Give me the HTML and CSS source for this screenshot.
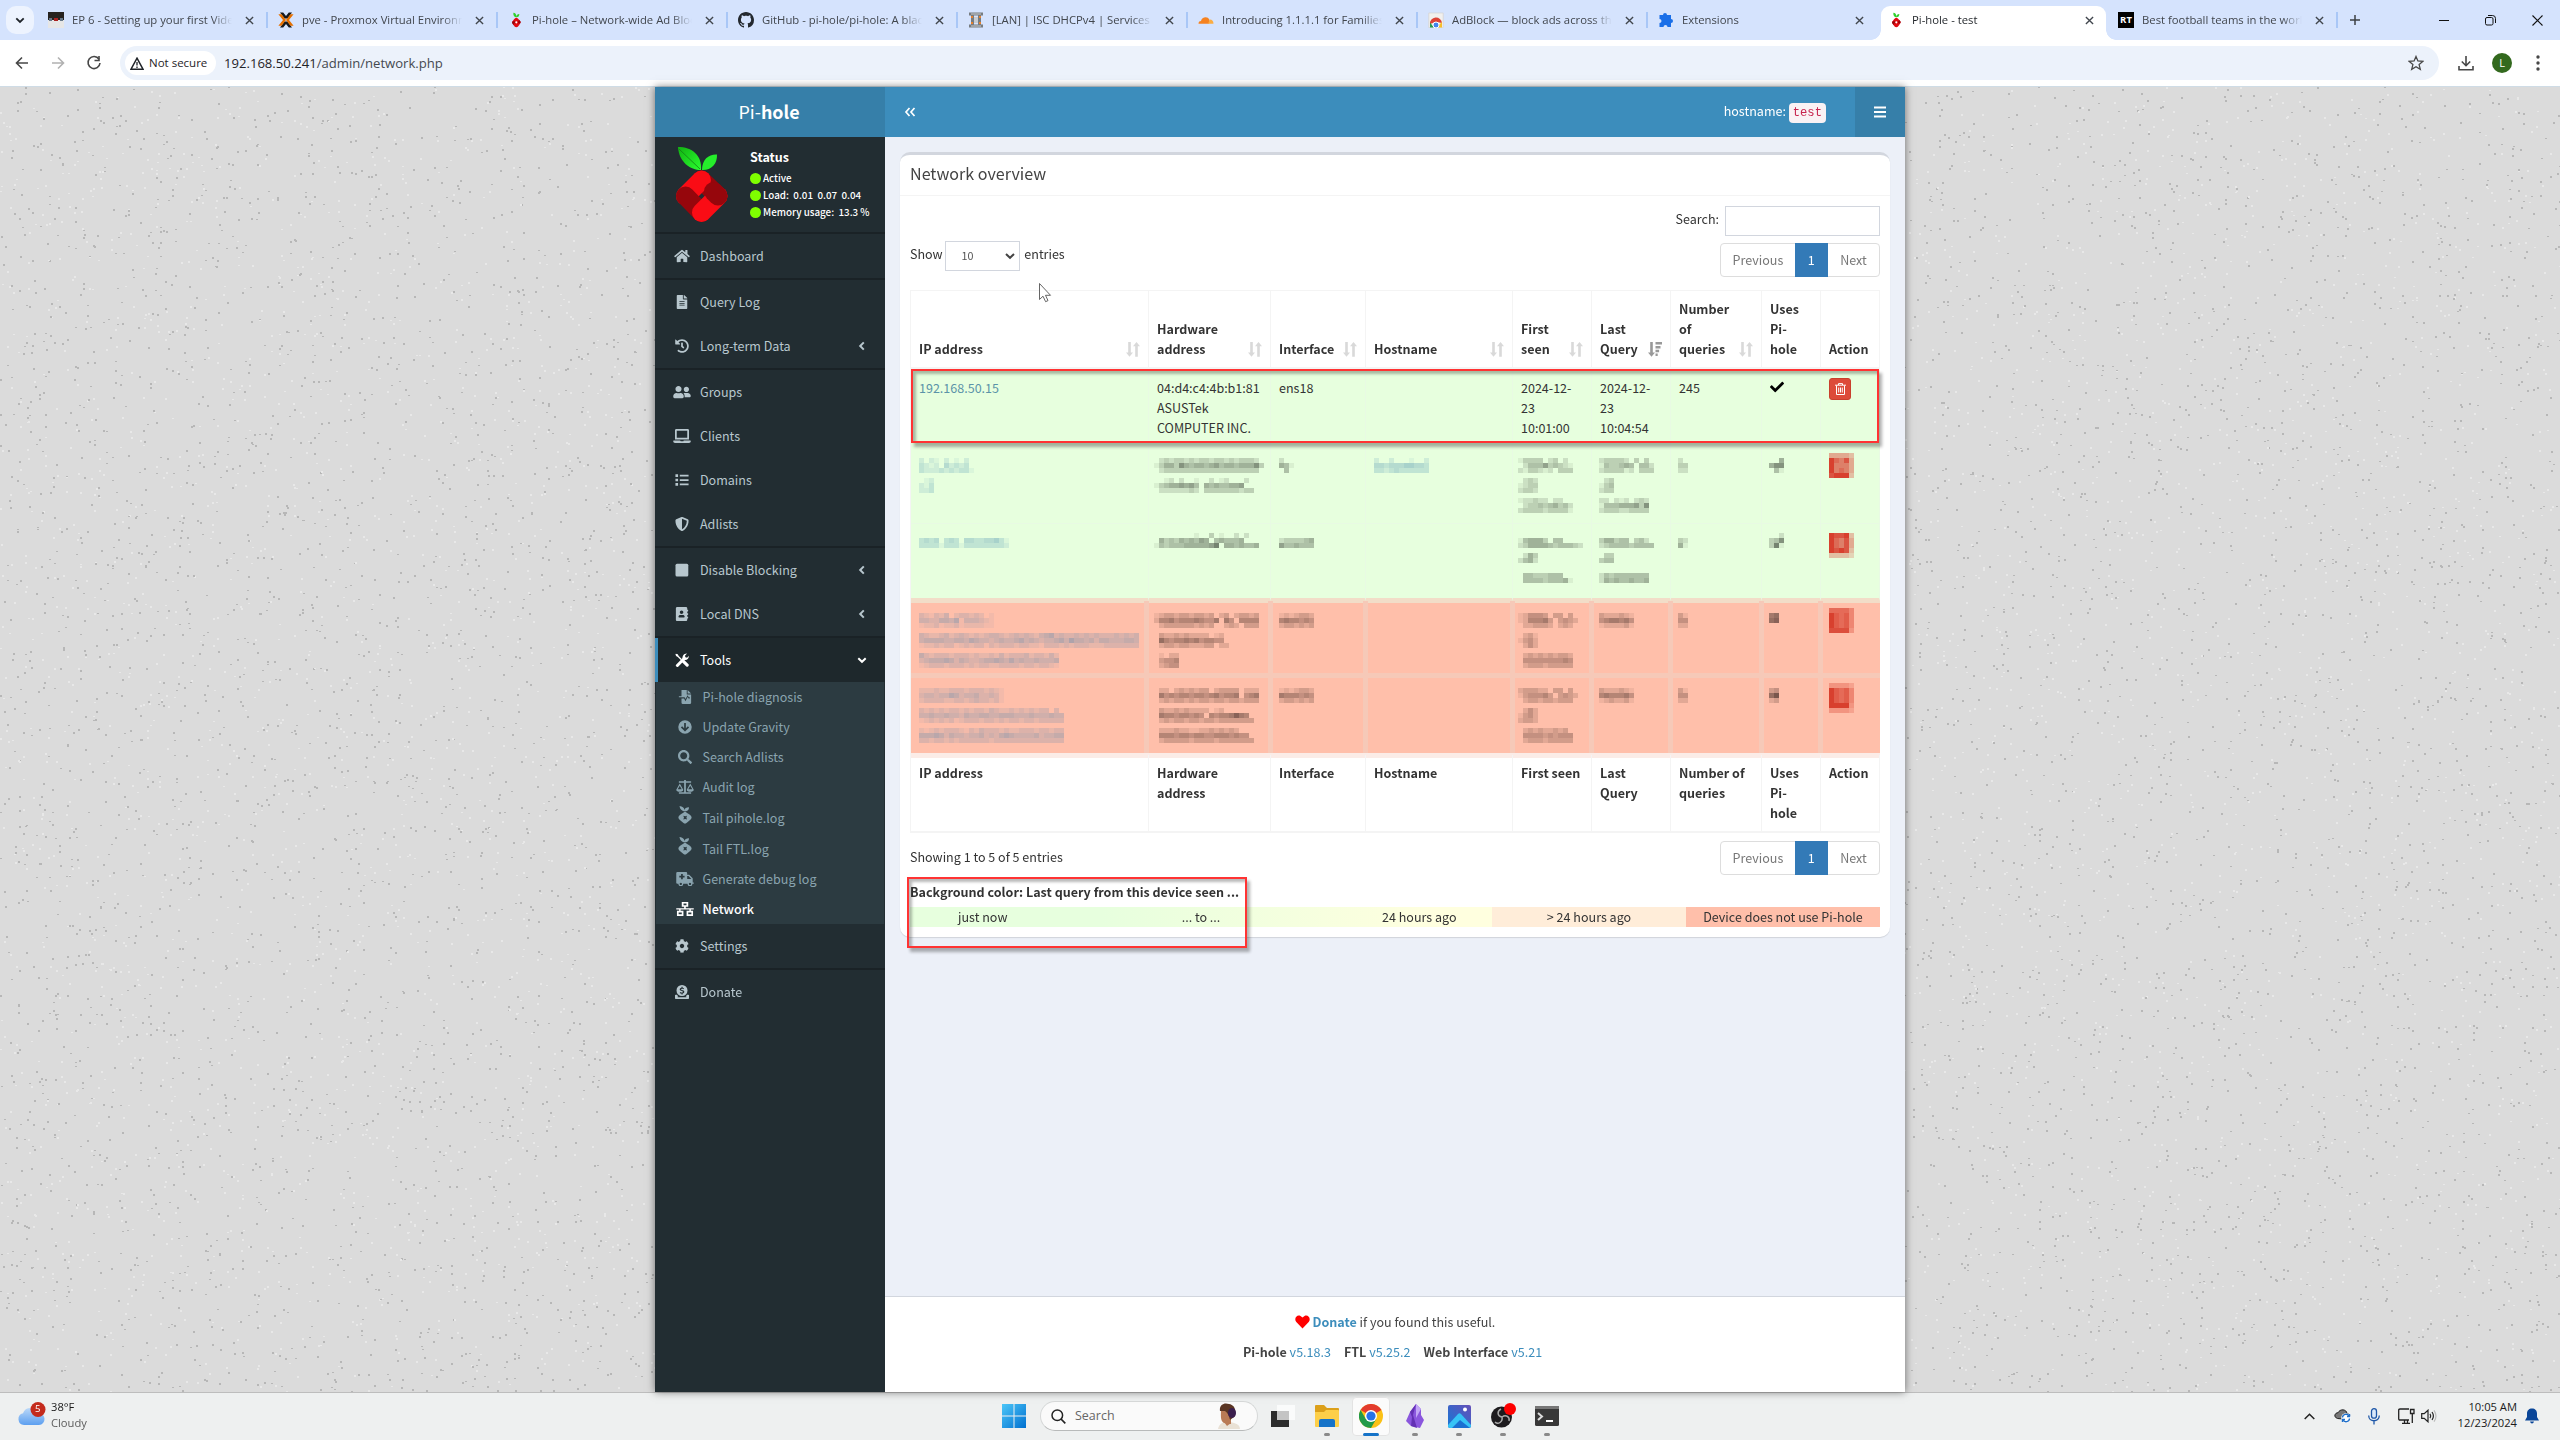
FILE: index.html
```html
<!DOCTYPE html>
<html lang="en">
<head>
<meta charset="utf-8">
<title>Pi-hole - test</title>
<link rel="stylesheet" href="styles.css">
</head>
<body>
<svg width="0" height="0" class="defs">
  <symbol id="home" viewBox="0 0 576 512"><path d="M280.37 148.26L96 300.11V464a16 16 0 0 0 16 16l112.06-.29a16 16 0 0 0 15.92-16V368a16 16 0 0 1 16-16h64a16 16 0 0 1 16 16v95.64a16 16 0 0 0 16 16.05L464 480a16 16 0 0 0 16-16V300L295.67 148.26a12.19 12.19 0 0 0-15.3 0zM571.6 251.47L488 182.56V44.05a12 12 0 0 0-12-12h-56a12 12 0 0 0-12 12v72.61L318.47 43a48 48 0 0 0-61 0L4.34 251.47a12 12 0 0 0-1.6 16.9l25.5 31A12 12 0 0 0 45.15 301l235.22-193.74a12.19 12.19 0 0 1 15.3 0L530.9 301a12 12 0 0 0 16.9-1.6l25.5-31a12 12 0 0 0-1.7-16.93z"/></symbol>
  <symbol id="file" viewBox="0 0 384 512"><path d="M224 136V0H24C10.7 0 0 10.7 0 24v464c0 13.3 10.7 24 24 24h336c13.3 0 24-10.7 24-24V160H248c-13.2 0-24-10.8-24-24zm64 236c0 6.600-5.400 12-12 12H108c-6.600 0-12-5.400-12-12v-8c0-6.600 5.400-12 12-12h168c6.600 0 12 5.400 12 12v8zm0-64c0 6.600-5.400 12-12 12H108c-6.600 0-12-5.400-12-12v-8c0-6.600 5.400-12 12-12h168c6.600 0 12 5.400 12 12v8zm0-72v8c0 6.600-5.400 12-12 12H108c-6.600 0-12-5.400-12-12v-8c0-6.600 5.400-12 12-12h168c6.600 0 12 5.400 12 12zm96-114.100v6.100H256V0h6.100c6.400 0 12.500 2.500 17 7l97.900 98c4.500 4.500 7 10.600 7 16.900z"/></symbol>
  <symbol id="history" viewBox="0 0 512 512"><path d="M504 255.531c.253 136.640-111.180 248.372-247.820 248.468-59.015.042-113.223-20.530-155.822-54.911-11.077-8.940-11.905-25.541-1.839-35.607l11.267-11.267c8.609-8.609 22.353-9.551 31.891-1.984C173.062 425.135 212.781 440 256 440c101.705 0 184-82.311 184-184 0-101.705-82.311-184-184-184-48.814 0-93.149 18.969-126.068 49.932l50.754 50.754c10.080 10.080 2.941 27.314-11.313 27.314H24c-8.837 0-16-7.163-16-16V38.627c0-14.254 17.234-21.393 27.314-11.314l49.372 49.372C129.209 34.136 189.552 8 256 8c136.810 0 247.747 110.780 248 247.531zm-180.912 78.784l9.823-12.630c8.138-10.463 6.253-25.542-4.210-33.679L288 256.349V152c0-13.255-10.745-24-24-24h-16c-13.255 0-24 10.745-24 24v135.651l65.409 50.874c10.463 8.137 25.541 6.253 33.679-4.210z"/></symbol>
  <symbol id="users" viewBox="0 0 640 512"><path d="M192 256c61.900 0 112-50.100 112-112S253.900 32 192 32 80 82.100 80 144s50.100 112 112 112zm76.800 32h-8.300c-20.800 10-43.900 16-68.500 16s-47.600-6-68.500-16h-8.300C51.600 288 0 339.600 0 403.200V432c0 26.500 21.500 48 48 48h288c26.500 0 48-21.500 48-48v-28.800c0-63.600-51.600-115.200-115.200-115.200zM480 256c53 0 96-43 96-96s-43-96-96-96-96 43-96 96 43 96 96 96zm48 32h-3.800c-13.900 4.800-28.600 8-44.200 8s-30.300-3.200-44.200-8H432c-20.400 0-39.200 5.900-55.700 15.400 24.400 26.300 39.700 61.200 39.700 99.800v38.400c0 2.200-.5 4.300-.6 6.400H592c26.500 0 48-21.500 48-48 0-61.900-50.100-112-112-112z"/></symbol>
  <symbol id="laptop" viewBox="0 0 640 512"><path d="M624 416H381.540c-.740 19.810-14.710 32-32.740 32H288c-18.690 0-33.020-17.470-32.770-32H16c-8.800 0-16 7.200-16 16v16c0 35.200 28.800 64 64 64h512c35.200 0 64-28.800 64-64v-16c0-8.800-7.200-16-16-16zM576 48c0-26.400-21.600-48-48-48H112C85.600 0 64 21.600 64 48v336h512V48zm-64 272H128V64h384v256z"/></symbol>
  <symbol id="list" viewBox="0 0 16 16"><path d="M.5 1.500h3v3h-3zM.5 6.500h3v3h-3zM.5 11.500h3v3h-3zM5.500 2h10v2h-10zM5.500 7h10v2h-10zM5.500 12h10v2h-10z"/></symbol>
  <symbol id="shield" viewBox="0 0 512 512"><path d="M466.500 83.700l-192-80a48.150 48.150 0 0 0-36.900 0l-192 80C27.700 91.100 16 108.600 16 128c0 198.500 114.500 335.700 221.500 380.300 11.800 4.900 25.100 4.900 36.900 0C360.100 472.600 496 349.300 496 128c0-19.400-11.700-36.900-29.500-44.300zM256.100 446.300l-.1-381 175.900 73.300c-3.300 151.400-82.100 261.100-175.800 307.700z"/></symbol>
  <symbol id="stop" viewBox="0 0 14 14"><rect x=".5" y=".7" width="12.800" height="12.800" rx="1.500"/></symbol>
  <symbol id="book" viewBox="0 0 448 512"><path d="M436 160c6.600 0 12-5.400 12-12v-40c0-6.600-5.400-12-12-12h-20V48c0-26.500-21.500-48-48-48H48C21.500 0 0 21.500 0 48v416c0 26.500 21.500 48 48 48h320c26.500 0 48-21.500 48-48v-48h20c6.600 0 12-5.400 12-12v-40c0-6.600-5.400-12-12-12h-20v-64h20c6.600 0 12-5.400 12-12v-40c0-6.600-5.400-12-12-12h-20v-64h20zm-228-32c35.300 0 64 28.700 64 64s-28.700 64-64 64-64-28.700-64-64 28.700-64 64-64zm112 236.800c0 10.600-10 19.200-22.400 19.200H118.400C106 384 96 375.400 96 364.800v-19.200c0-31.800 30.100-57.600 67.200-57.600h5c12.300 5.100 25.700 8 39.800 8s27.600-2.900 39.800-8h5c37.100 0 67.200 25.800 67.200 57.600v19.200z"/></symbol>
  <symbol id="tools" viewBox="0 0 16 16"><path d="M1 .8L3.200 1.300 4.200 3.500 8 7.200 6.900 8.300 3.200 4.500 1.200 3.500 .5 1.300z"/><path d="M2.700 14.200L10.300 6.500" stroke="currentColor" stroke-width="3.400" stroke-linecap="round"/><path d="M8.700 6.900c-.7-3 1.400-6.600 5-6.300L11.400 3l.5 1.900 1.900.4 1.900-2.300c.4 3-1.700 5.300-4.900 4.900z"/><path d="M9.600 9.600l4.300 4.200" stroke="currentColor" stroke-width="3.600" stroke-linecap="round"/></symbol>
  <symbol id="medical" viewBox="0 0 16 16"><path d="M4 0h6v5h5v9.500a1.500 1.500 0 0 1-1.500 1.500h-8A1.500 1.500 0 0 1 4 14.500V9.800h3l1.500 3L11 8l1 1.800h1.500V8.400h-1.300L11 6l-2.400 4.300L7.500 8.400H1V7h3zM11 0l4 4h-4z"/></symbol>
  <symbol id="down" viewBox="0 0 16 16"><path fill-rule="evenodd" d="M8 .3a7.700 7.700 0 1 1 0 15.400A7.700 7.700 0 0 1 8 .3zM7 3.500v6L4.700 7.200 3.300 8.600 8 13.200l4.700-4.600-1.400-1.400L9 9.500v-6z"/></symbol>
  <symbol id="search" viewBox="0 0 512 512"><path d="M505 442.700L405.300 343c-4.500-4.500-10.600-7-17-7H372c27.600-35.300 44-79.700 44-128C416 93.100 322.900 0 208 0S0 93.100 0 208s93.100 208 208 208c48.300 0 92.700-16.400 128-44v16.300c0 6.400 2.500 12.500 7 17l99.700 99.700c9.400 9.400 24.600 9.400 33.900 0l28.300-28.300c9.400-9.400 9.400-24.600.1-34zM208 336c-70.700 0-128-57.200-128-128 0-70.700 57.200-128 128-128 70.700 0 128 57.200 128 128 0 70.700-57.200 128-128 128z"/></symbol>
  <symbol id="scale" viewBox="0 0 20 16"><path fill-rule="evenodd" d="M9 0h2v1.500h6V3h-6v11h6v1.700H3V14h6V3H3V1.500h6zM4 4l4 7c0 3.300-8 3.300-8 0zm0 2.500L1.700 10.600h4.600zM16 4l4 7c0 3.300-8 3.300-8 0zm0 2.500l-2.300 4.100h4.600z"/></symbol>
  <symbol id="pihole" viewBox="0 0 14 18"><path d="M1.500 0c3 .3 4.500 1.500 5 4C7 2.300 8.500 1.200 11 1.300c0 2.500-1.300 4-4 4.200C4 5 1.800 3.200 1.500 0z"/><path fill-rule="evenodd" d="M7 6c1.300 0 1.500.7 3 1.500 2.300 1.500 3.600 2.600 3.600 4s-1.400 2.600-3.600 4.200C8.500 16.700 8.300 17.500 7 17.500s-1.500-.8-3-1.800C1.800 14.100.4 13 .4 11.500S1.800 9 4 7.500C5.500 6.700 5.700 6 7 6zM5.300 9.700L6 11.600l-.7 2 1.900-.7 1.800.7-.6-2 .6-1.900-1.800.6z"/></symbol>
  <symbol id="truck" viewBox="0 0 20 16"><path fill-rule="evenodd" d="M1.300 0h9.900q1.300 0 1.300 1.300V3h2.300l4 4v5H20v1.500h-1.500a2.800 2.800 0 0 1-5.600 0H8a2.800 2.800 0 0 1-5.600 0H1.300Q0 13.500 0 12.200V1.300Q0 0 1.300 0zM5.500 2.300v2h-2v2h2v2h2v-2h2v-2h-2v-2zm7 2.300v3.500h4.800L14 4.600zM5.200 12.200a1.300 1.300 0 1 0 .01 0zm10.500 0a1.300 1.300 0 1 0 .01 0z"/></symbol>
  <symbol id="network" viewBox="0 0 20 16"><path fill-rule="evenodd" d="M6.300 0h7.400v5.500h-2.800V7H20v1.700h-3.300V10h2.500v6h-7.400v-6H15V8.700H5V10h3.200v6H.8v-6h2.500V8.700H0V7h9V5.500H6.300zm2 1.800v2h3.400v-2zM2.700 11.900v2.200h3.600v-2.200zm11 0v2.200h3.600v-2.200z"/></symbol>
  <symbol id="cog" viewBox="0 0 512 512"><path d="M487.400 315.700l-42.600-24.600c4.300-23.200 4.300-47 0-70.200l42.600-24.600c4.900-2.800 7.100-8.600 5.500-14-11.100-35.600-30-67.800-54.700-94.600-3.800-4.100-10-5.100-14.800-2.300L380.800 110c-17.900-15.400-38.500-27.300-60.800-35.100V25.800c0-5.600-3.900-10.500-9.400-11.700-36.700-8.200-74.300-7.800-109.200 0-5.500 1.200-9.400 6.100-9.400 11.700V75c-22.200 7.900-42.800 19.800-60.800 35.100L88.700 85.500c-4.900-2.800-11-1.900-14.800 2.300-24.700 26.700-43.600 58.900-54.700 94.600-1.700 5.400.6 11.200 5.500 14L67.300 221c-4.300 23.200-4.300 47 0 70.200l-42.600 24.600c-4.900 2.800-7.100 8.600-5.500 14 11.100 35.600 30 67.800 54.700 94.600 3.800 4.100 10 5.100 14.800 2.300l42.600-24.600c17.900 15.400 38.500 27.300 60.800 35.100v49.200c0 5.600 3.900 10.500 9.400 11.700 36.700 8.200 74.300 7.800 109.200 0 5.500-1.200 9.400-6.100 9.400-11.700v-49.200c22.200-7.900 42.800-19.800 60.800-35.100l42.600 24.600c4.900 2.800 11 1.900 14.800-2.300 24.700-26.700 43.600-58.900 54.700-94.600 1.500-5.500-.7-11.300-5.600-14.100zM256 336c-44.100 0-80-35.900-80-80s35.900-80 80-80 80 35.900 80 80-35.900 80-80 80z"/></symbol>
  <symbol id="donate" viewBox="0 0 16 16"><path fill-rule="evenodd" d="M8 0a6.300 6.300 0 1 1 0 12.600A6.300 6.300 0 0 1 8 0zm-.6 2v1C5 3.300 4.700 6 7 6.600l1.500.4c1 .5.500 1.500-.5 1.500-.7 0-1.300-.2-1.900-.6L5.300 9c.6.500 1.300.8 2.100.8v1h1.300v-1c2.400-.4 2.700-3 .3-3.800L7.500 5.600c-1-.4-.4-1.300.4-1.300.6 0 1.100.2 1.600.5l.9-1C9.900 3.400 9.300 3.100 8.700 3V2zM.8 11h1.500c.5.900 1 1.500 1.700 2.100H3v.9h10v-.9h-1c.7-.6 1.300-1.200 1.700-2.100h1.500q.8 0 .8.800v3.400q0 .8-.8.800H.8q-.8 0-.8-.8v-3.400Q0 11 .8 11z"/></symbol>
  <symbol id="check" viewBox="0 0 512 512"><path d="M173.898 439.404l-166.400-166.400c-9.997-9.997-9.997-26.206 0-36.204l36.203-36.204c9.997-9.998 26.207-9.998 36.204 0L192 312.690 432.095 72.596c9.997-9.997 26.207-9.997 36.204 0l36.203 36.204c9.997 9.997 9.997 26.206 0 36.204l-294.400 294.401c-9.998 9.997-26.207 9.997-36.204-.001z"/></symbol>
  <symbol id="left" viewBox="0 0 10 10"><path d="M6.800 1.400L3.200 5l3.600 3.600" fill="none" stroke="currentColor" stroke-width="2"/></symbol>
  <symbol id="chevdown" viewBox="0 0 10 10"><path d="M1.300 3.200L5 6.800l3.700-3.600" fill="none" stroke="currentColor" stroke-width="2"/></symbol>
  <symbol id="sort" viewBox="0 0 14 15"><path d="M2.200 0h2.600v10.500H7L3.500 14.700 0 10.500h2.200zM9.200 14.700h2.600V4.200H14L10.500 0 7 4.200h2.200z"/></symbol>
  <symbol id="sortdesc" viewBox="0 0 14 15"><path d="M2.200 0h2.600v10.500H7L3.500 14.700 0 10.500h2.200zM7.500 0H14v2.400H7.500zM7.500 4h5v2.400h-5zM7.500 7.800h3.600v2.400H7.500zM7.500 11.500h2.200v2.400H7.500z"/></symbol>
  <symbol id="berry" viewBox="0 0 14 24"><path d="M3 1c3 .3 4.500 2 4.500 6C8 4.500 9 3 12 3c0 3-1.500 5-4.500 5C4.500 7.500 2.500 5 3 1z" fill="#2fd02c"/><path d="M7.500 8.500c2 0 2.500 1.500 4 3 2 2 2.500 3 2.500 4s-1 2.500-2.500 4.500c-1.300 2-2 3-4 3s-2.700-1-4-3C2 18 1 16.500 1 15.500s1-2 2.500-4c1.500-1.500 2-3 4-3z" fill="#e00b12"/><path d="M1 15.500c1-2.500 5-2 4.500 0S3.300 18 3.500 20C2 18 1 16.500 1 15.500zm13 0c-1 2.500-4 2.200-4 0s2-2.500 1.500-4c2 2 2.500 3 2.500 4z" fill="#96060c"/><circle cx="7.500" cy="15.500" r="1.600" fill="#fff"/></symbol>
  <symbol id="x" viewBox="0 0 10 10"><path d="M1 1l8 8M9 1L1 9" stroke="#41464d" stroke-width="1.500" fill="none"/></symbol>
</svg>

<header class="tabstrip">
  <span class="tabsearch"><svg width="10" height="10" viewBox="0 0 10 10"><path d="M1.300 3.300L5 7l3.700-3.700" fill="none" stroke="#1f2328" stroke-width="1.800"/></svg></span>
  <div class="tabs">
    <div class="tab"><svg class="fav" viewBox="0 0 16 16"><path fill="#e6e6e6" d="M0 0h16v16H0z"/><path fill="#26221f" d="M0 0h16v8H0z"/><path fill="#a22" d="M6 6h4v3H6z"/><path fill="#678" d="M1 6h3v3H1zM12 6h3v3h-3z"/></svg><span class="title">EP 6 - Setting up your first Video Lab</span><svg class="x"><use href="#x"/></svg></div>
    <div class="tab"><svg class="fav" viewBox="0 0 16 16"><path d="M2 .5h3.200L8 4l2.800-3.500H14L9.500 6.500h-3zM2 15.500h3.200L8 12l2.800 3.500H14L9.500 9.500h-3z" fill="#16191c"/><path d="M.4 2.200h3.200L8 8l-4.400 5.800H.4L5 8zM15.600 2.200h-3.200L8 8l4.400 5.800h3.200L11 8z" fill="#e57000"/></svg><span class="title">pve - Proxmox Virtual Environment</span><svg class="x"><use href="#x"/></svg></div>
    <div class="tab"><svg class="fav"><use href="#berry"/></svg><span class="title">Pi-hole – Network-wide Ad Blocking</span><svg class="x"><use href="#x"/></svg></div>
    <div class="tab"><svg class="fav" viewBox="0 0 16 16"><path fill="#24292f" d="M8 0C3.580 0 0 3.580 0 8c0 3.540 2.290 6.530 5.470 7.590.4.070.55-.17.55-.38 0-.19-.01-.82-.01-1.490-2.010.37-2.530-.49-2.690-.94-.09-.23-.48-.94-.82-1.130-.28-.15-.68-.52-.01-.53.63-.01 1.080.58 1.230.82.72 1.210 1.870.87 2.330.66.07-.52.28-.87.51-1.070-1.780-.2-3.640-.89-3.640-3.950 0-.87.31-1.590.82-2.150-.08-.2-.36-1.020.08-2.120 0 0 .67-.21 2.200.82.64-.18 1.320-.27 2-.27s1.360.09 2 .27c1.530-1.040 2.200-.82 2.200-.82.44 1.100.16 1.920.08 2.120.51.56.82 1.270.82 2.150 0 3.070-1.870 3.750-3.650 3.950.29.25.54.73.54 1.480 0 1.070-.01 1.930-.01 2.200 0 .21.15.46.55.38A8 8 0 0 0 16 8c0-4.420-3.580-8-8-8z"/></svg><span class="title">GitHub - pi-hole/pi-hole: A black hole</span><svg class="x"><use href="#x"/></svg></div>
    <div class="tab"><svg class="fav" viewBox="0 0 16 16"><path fill="#777c80" d="M1 .5h14v3H1zM1 12.500h14v3H1zM3 3h3v10H3zM10 3h3v10h-3z"/><path fill="#e9812c" d="M3 4h2v2H3zM3 10h2v2H3zM11 4h2v2h-2zM11 10h2v2h-2z"/><path fill="#c9ccd0" d="M3 1.500h10v1H3zM3 13.500h10v1H3zM6 5h4v6H6z"/></svg><span class="title">[LAN] | ISC DHCPv4 | Services | OPN</span><svg class="x"><use href="#x"/></svg></div>
    <div class="tab"><svg class="fav" viewBox="0 0 16 16"><path fill="#f6821f" d="M.5 11.700c0-2 1.200-2.700 2.500-2.700C3.500 5.500 9.500 3.300 11.500 8L11 11.700z"/><path fill="#fbad41" d="M11.800 7.500c2.500 0 3.700 2 3.700 4.200H10z"/></svg><span class="title">Introducing 1.1.1.1 for Families</span><svg class="x"><use href="#x"/></svg></div>
    <div class="tab"><svg class="fav" viewBox="0 0 16 16"><path fill="#f1f0ee" stroke="#d4d2d0" stroke-width=".7" d="M.8 1h14.400v14.500H.8z"/><path fill="#dd4337" d="M2 12a6 6 0 0 1 12-1L8 10z"/><path fill="#2a9a50" d="M2 10.500l4 5H2z"/><path fill="#f6be2b" d="M14 10v5.500H8z"/><circle cx="8" cy="13" r="3" fill="#4384ec" stroke="#fff"/></svg><span class="title">AdBlock — block ads across the web</span><svg class="x"><use href="#x"/></svg></div>
    <div class="tab nosep"><svg class="fav" viewBox="0 0 16 16"><path fill="#1a6fe8" d="M5 3a2 2 0 0 1 4 0h4v4a2 2 0 0 1 0 4v4H9.500a2 2 0 0 0-4 0H1.500v-4a2 2 0 0 0 0-4V3z"/></svg><span class="title">Extensions</span><svg class="x"><use href="#x"/></svg></div>
    <div class="tab active"><svg class="fav"><use href="#berry"/></svg><span class="title">Pi-hole - test</span><svg class="x"><use href="#x"/></svg></div>
    <div class="tab"><span class="fav rt">RT</span><span class="title">Best football teams in the world</span><svg class="x"><use href="#x"/></svg></div>
  </div>
  <svg class="plus" width="12" height="12" viewBox="0 0 12 12"><path d="M6 1v10M1 6h10" stroke="#3c4043" stroke-width="1.500"/></svg>
  <div class="winctl">
    <svg width="10" height="10"><path d="M0 5.500h10" stroke="#111"/></svg>
    <svg width="11" height="11" fill="none" stroke="#111"><rect x=".5" y="2.500" width="7.500" height="7.500" rx="1.500"/><path d="M3 .5h4.500a3 3 0 0 1 3 3V8"/></svg>
    <svg width="11" height="11"><path d="M.5.5l10 10M10.500.5l-10 10" stroke="#111" stroke-width="1.100"/></svg>
  </div>
</header>

<div class="toolbar">
  <svg class="nav" viewBox="0 0 16 16"><path d="M14 8H3M8 2.500L2.500 8 8 13.500" fill="none" stroke="#474747" stroke-width="1.600"/></svg>
  <svg class="nav" viewBox="0 0 16 16"><path d="M2 8h11M8 2.500L13.500 8 8 13.500" fill="none" stroke="#b1b1b1" stroke-width="1.600"/></svg>
  <svg class="nav" viewBox="0 0 16 16"><path d="M13 4.200A6 6 0 1 0 14 8" fill="none" stroke="#474747" stroke-width="1.600"/><path d="M13.800 1v5.300H8.500V4.700h3.700V1z" fill="#474747"/></svg>
  <div class="omnibox">
    <span class="chip"><svg width="14" height="13" viewBox="0 0 14 13"><path d="M7 1.200L13 12.200H1z" fill="none" stroke="#1f2328" stroke-width="1.500"/><path d="M7 5v3.600M7 9.600V11" stroke="#1f2328" stroke-width="1.300"/></svg>Not secure</span>
    <span class="url">192.168.50.241<span>/admin/network.php</span></span>
    <svg class="star" width="16" height="16" viewBox="0 0 16 16"><path d="M8 1.500l1.900 4.500 4.900.4-3.700 3.200 1.200 4.800L8 11.800l-4.300 2.600 1.200-4.800L1.200 6.400 6.100 6z" fill="none" stroke="#474747" stroke-width="1.300"/></svg>
  </div>
  <svg class="dl" width="16" height="16" viewBox="0 0 16 16"><path d="M8 1v9.500M3.800 6.500L8 10.700l4.200-4.200M1 11v3.700h14V11" fill="none" stroke="#474747" stroke-width="1.600"/></svg>
  <span class="avatar">L</span>
  <svg class="dots" width="4" height="16" fill="#474747"><circle cx="2" cy="2" r="1.700"/><circle cx="2" cy="8" r="1.700"/><circle cx="2" cy="14" r="1.700"/></svg>
</div>

<main class="stage">
  <canvas class="grain" id="grain" width="2560" height="1305"></canvas>
  <div class="wrapper">
    <aside class="sidebar">
      <div class="brand">Pi-<b>hole</b></div>
      <div class="panel">
        <svg class="logo" width="54" height="78" viewBox="0 0 54 78">
          <defs><linearGradient id="lf" x1="0" y1="0" x2="1" y2="1"><stop offset="0" stop-color="#12b212"/><stop offset="1" stop-color="#2aff2f"/></linearGradient></defs>
          <path d="M3 0c14 0 24 8 23 23C15 23 4 15 3 0z" fill="url(#lf)"/><path d="M4 2l21 20" stroke="#148016" stroke-width=".8"/><path d="M27 23c0-11 7-16 15-15.500C42.500 17 36 23.500 27 23z" fill="#25ee2b"/>
          <g stroke-width="19" stroke-linecap="round">
            <path d="M43 49L26.500 33" stroke="#96060c"/><path d="M26.500 33L10.500 49" stroke="#fa0c15"/><path d="M10.500 49l16 16.500" stroke="#96060c"/><path d="M26.500 65.500L43 49" stroke="#fa0c15"/><path d="M43 49l-4.500-4.500" stroke="#96060c"/>
          </g>
        </svg>
        <div class="info"><p class="st">Status</p><p><i></i>Active</p><p><i></i>Load:&nbsp; 0.01&nbsp; 0.07&nbsp; 0.04</p><p><i></i>Memory usage:&nbsp; 13.3 %</p></div>
      </div>
      <nav class="menu">
        <a class="sep"><svg class="ic"><use href="#home"/></svg>Dashboard</a>
        <a class="sep"><svg class="ic"><use href="#file"/></svg>Query Log</a>
        <a><svg class="ic"><use href="#history"/></svg>Long-term Data<svg class="car"><use href="#left"/></svg></a>
        <a class="sep"><svg class="ic wide"><use href="#users"/></svg>Groups</a>
        <a><svg class="ic wide"><use href="#laptop"/></svg>Clients</a>
        <a><svg class="ic"><use href="#list"/></svg>Domains</a>
        <a><svg class="ic"><use href="#shield"/></svg>Adlists</a>
        <a class="sep"><svg class="ic"><use href="#stop"/></svg>Disable Blocking<svg class="car"><use href="#left"/></svg></a>
        <a><svg class="ic"><use href="#book"/></svg>Local DNS<svg class="car"><use href="#left"/></svg></a>
        <a class="sep open"><svg class="ic"><use href="#tools"/></svg>Tools<svg class="car"><use href="#chevdown"/></svg></a>
        <div class="sub">
          <a><svg class="ic"><use href="#medical"/></svg>Pi-hole diagnosis</a>
          <a><svg class="ic"><use href="#down"/></svg>Update Gravity</a>
          <a><svg class="ic"><use href="#search"/></svg>Search Adlists</a>
          <a><svg class="ic wide"><use href="#scale"/></svg>Audit log</a>
          <a class="tall"><svg class="ic pi"><use href="#pihole"/></svg>Tail pihole.log</a>
          <a class="tall"><svg class="ic pi"><use href="#pihole"/></svg>Tail FTL.log</a>
          <a><svg class="ic wide"><use href="#truck"/></svg>Generate debug log</a>
          <a class="cur"><svg class="ic wide"><use href="#network"/></svg>Network</a>
        </div>
        <a><svg class="ic"><use href="#cog"/></svg>Settings</a>
        <a class="sep"><svg class="ic"><use href="#donate"/></svg>Donate</a>
      </nav>
    </aside>
    <div class="main">
      <div class="topbar">
        <svg class="fold" width="12" height="10" viewBox="0 0 12 10"><path d="M5.500 1L2 5l3.500 4M10.500 1L7 5l3.500 4" fill="none" stroke="#fff" stroke-width="1.700"/></svg>
        <span class="host">hostname: <code>test</code></span>
        <span class="burger"><svg width="12" height="12"><path d="M0 1.500h12M0 6h12M0 10.500h12" stroke="#fff" stroke-width="2"/></svg></span>
      </div>
      <div class="content">
        <section class="box">
          <h3>Network overview</h3>
          <div class="body">
            <div class="filters">
              <label class="show">Show <span class="select">10<svg width="10" height="8" viewBox="0 0 10 8"><path d="M1 2l4 3.800L9 2" fill="none" stroke="#444" stroke-width="2"/></svg></span> entries</label>
              <div class="right">
                <label class="find">Search:<span class="input"></span></label>
                <div class="pager"><span>Previous</span><span class="on">1</span><span>Next</span></div>
              </div>
            </div>
            <div class="tablebox">
            <table>
              <colgroup><col class="c1"><col class="c2"><col class="c3"><col class="c4"><col class="c5"><col class="c6"><col class="c7"><col class="c8"><col class="c9"></colgroup>
              <thead><tr>
                <th>IP address<svg class="so"><use href="#sort"/></svg></th><th>Hardware<br>address<svg class="so"><use href="#sort"/></svg></th><th>Interface<svg class="so"><use href="#sort"/></svg></th><th>Hostname<svg class="so"><use href="#sort"/></svg></th><th>First<br>seen<svg class="so"><use href="#sort"/></svg></th><th>Last<br>Query<svg class="so dark"><use href="#sortdesc"/></svg></th><th>Number<br>of<br>queries<svg class="so"><use href="#sort"/></svg></th><th>Uses<br>Pi-<br>hole</th><th>Action</th>
              </tr></thead>
              <tbody>
                <tr class="ok"><td class="lnk">192.168.50.15</td><td>04:d4:c4:4b:b1:81<br>ASUSTek<br>COMPUTER INC.</td><td>ens18</td><td></td><td>2024-12-<br>23<br>10:01:00</td><td>2024-12-<br>23<br>10:04:54</td><td>245</td><td><svg class="chk"><use href="#check"/></svg></td><td><span class="trash"><svg width="11" height="12" viewBox="0 0 11 12" fill="none" stroke="#fff"><path d="M0 2.200h11M3.500 2V.6h4V2M1.500 2.500v9h8v-9M3.700 4.500v5M5.500 4.500v5M7.300 4.500v5"/></svg></span></td></tr>
                <tr class="ok px" data-dy="0">
                  <td data-c="b" data-m="2.21.2.1.2|3212.42323.|32223232331||.12|213|223"></td>
                  <td data-c="k" data-dx="-3" data-m=".23233232332332323332|1355375455456455455573|.23333333333333333333||..12.2..1..2.12...2|134556564.54544556|.22222232.3333333233"></td>
                  <td data-c="k" data-m="2..|541|.4."></td>
                  <td data-c="b" data-m="2..2...1..2|44344455443|33234333333"></td>
                  <td data-c="k" data-dx="-3" data-m="13333.23.2.|.2444634321|2133212.333||.232|1233|2332||122322.22.|.2334345342|23333233331"></td>
                  <td data-c="k" data-dx="-1" data-m="233332.3.3.|1433454.442|2333312.333||.23|134|233||22.212.232|1444555637|2333223333"></td>
                  <td data-c="k" data-dx="-1" data-m="2.|33|22"></td><td data-c="k" data-dx="-1" data-m="..5|577|.41"></td>
                  <td data-c="r" data-top="-5" data-m="44443|97684|96664|96764|89993"></td></tr>
                <tr class="ok px" data-dy="-7">
                  <td data-c="b" data-m="||3434.343.443344531|333313331333333332"></td>
                  <td data-c="k" data-dx="-3" data-m="|........1..3.1..2.2.|.5343545465.454445|1434445555568.5545445"></td>
                  <td data-c="k" data-m="||2333345|6445444"></td><td></td>
                  <td data-c="k" data-dx="-3" data-m="||145553.44.|2355554344432||.253|2452|||.44333444.|.4444344451"></td>
                  <td data-c="k" data-dx="-1" data-m="||355344.342|23444434444||.33|344|||2434444444|2545445445"></td>
                  <td data-c="k" data-dx="-1" data-m="||32|51"></td><td data-c="k" data-dx="-1" data-m="|..2|347|381"></td>
                  <td data-c="r" data-m="|98893|97684|97684|98983|33332"></td></tr>
                <tr class="bad px" data-dy="-4">
                  <td data-c="b" data-m="|321324.233232.1|443355461444321|122312231222211||43223423432323443234343245634334343433343434|45555445546544345445645434456475545355444554|12232331232331323332332213332323332223333333||5323332333232232423334233242|3455565354334556546454454445|1233323332323322333323323321"></td>
                  <td data-c="k" data-dx="-3" data-m="|123323323323.23.23323|2556455565446.64.5555|.23333332323..232.333||.3223232222.12|.7545565645544|.23323322233.22||.1.22|.3445|.2344"></td>
                  <td data-c="k" data-m="|1212332|5655454|2332323"></td><td></td>
                  <td data-c="k" data-dx="-3" data-m="|124443.33.3|1255563.3432|.223332.232||.231|1342|.242||.2323232332|.4444444454|.2333233333"></td>
                  <td data-c="k" data-dx="-1" data-m="|3222321|4566564|1222231"></td>
                  <td data-c="k" data-dx="-1" data-m="|31|44|22"></td><td data-c="k" data-dx="-1" data-m="|67|78"></td>
                  <td data-c="r" data-m="66664|97674|97674|97674|88883"></td></tr>
                <tr class="bad px" data-dy="-6">
                  <td data-c="b" data-m="|22232233323332321|34434465344533431|23333223323433231||32323233232332432232323233.3|44544544354455445554445444544|12323231233323323233233233333||21232333213243332322333233233|55565354434453435654444534455|33233232333333233333333333333"></td>
                  <td data-c="k" data-dx="-3" data-m="|.22.2323233.23333.222|.6454554554564556.456|.23233232332332332333||.3223232222.12|.655455454.54556865|.2323323323323333333||.2223221122323232|.555455455445554544|.2333332333323333333"></td>
                  <td data-c="k" data-m="|1212332|6555454|2332323"></td><td></td>
                  <td data-c="k" data-dx="-3" data-m="|233322.33.3|1344453.3432|.2332332333||.242|1342|2332||.232322323|.4444343444|.2333233333"></td>
                  <td data-c="k" data-dx="-1" data-m="|3222321|5655564|1232231"></td>
                  <td data-c="k" data-dx="-1" data-m="|31|44|22"></td><td data-c="k" data-dx="-1" data-m="|34|79|23"></td>
                  <td data-c="r" data-m="33332|97674|97674|97674|99993|33332"></td></tr>
              </tbody>
              <tfoot><tr><th>IP address</th><th>Hardware<br>address</th><th>Interface</th><th>Hostname</th><th>First seen</th><th>Last<br>Query</th><th>Number of<br>queries</th><th>Uses<br>Pi-<br>hole</th><th>Action</th></tr></tfoot>
            </table>
            <div class="mark row"></div>
            </div>
            <div class="summary"><span>Showing 1 to 5 of 5 entries</span><div class="pager"><span>Previous</span><span class="on">1</span><span>Next</span></div></div>
            <div class="legendbox">
              <p><b>Background color: Last query from this device seen ...</b></p>
              <div class="legend"><div class="grad"><span>just now</span><span>... to ...</span><span>24 hours ago</span></div><span class="day">&gt; 24 hours ago</span><span class="no">Device does not use Pi-hole</span></div>
              <div class="mark leg"></div>
            </div>
          </div>
        </section>
      </div>
      <footer><p><svg width="15" height="14" viewBox="0 0 15 14"><path d="M7.500 13.500L1.300 7C-1.500 3.500 2-1 5.500.9L7.500 2.600 9.500.9C13-1 16.500 3.500 13.700 7z" fill="#f00"/></svg> <b class="lnk">Donate</b> if you found this useful.</p><p class="vers"><span><b>Pi-hole</b> <a>v5.18.3</a></span><span><b>FTL</b> <a>v5.25.2</a></span><span><b>Web Interface</b> <a>v5.21</a></span></p></footer>
    </div>
  </div>
  <svg class="cursor" width="13" height="20" viewBox="0 0 13 20"><path d="M.5.5v16l3.500-3.300 2.600 5.500 2.400-1.100-2.500-5.300h5z" fill="#fff" stroke="#555" stroke-width=".9"/></svg>
</main>

<div class="taskbar">
  <div class="weather">
    <svg width="30" height="26" viewBox="0 0 30 26"><defs><linearGradient id="cl" x1="0" y1="0" x2="0" y2="1"><stop offset="0" stop-color="#bcd9f8"/><stop offset="1" stop-color="#5c9ff0"/></linearGradient></defs><path d="M7 23a6 6 0 0 1-1-11.800A8 8 0 0 1 21 11a6 6 0 0 1 1 12z" fill="url(#cl)"/><circle cx="21" cy="7.500" r="7.500" fill="#c42b1c"/></svg><em>5</em>
    <div><p>38°F</p><p class="dim">Cloudy</p></div>
  </div>
  <div class="apps">
    <svg class="win" width="24" height="24" viewBox="0 0 24 24"><defs><linearGradient id="wg" x1="0" y1="0" x2="1" y2="1"><stop offset="0" stop-color="#4cc6f8"/><stop offset="1" stop-color="#0070d0"/></linearGradient></defs><path d="M0 0h11.500v11.500H0zM12.500 0H24v11.500H12.500zM0 12.500h11.500V24H0zM12.500 12.500H24V24H12.500z" fill="url(#wg)"/></svg>
    <div class="search"><svg width="15" height="15" viewBox="0 0 15 15"><circle cx="6.300" cy="6.300" r="5.300" fill="none" stroke="#222" stroke-width="1.500"/><path d="M10 10l4.300 4.300" stroke="#222" stroke-width="1.700"/></svg><span>Search</span>
      <svg class="lady" width="26" height="26" viewBox="0 0 26 26"><path d="M2 26c1-5 5-7 9-8l7 2c4 1 6 3 6 6z" fill="#e9e1d5"/><path d="M5 7c0 5-1 11 3 13l7 1V9z" fill="#b97a55"/><path d="M4 8C3 2 8-1 13 1c6 1 8 7 5 13l-4 3c-1-4-2-7-5-9z" fill="#5a3523"/><ellipse cx="16" cy="10" rx="4" ry="5" fill="#3b1f4e"/><path d="M8 19l6-3 1 4-4 3z" fill="#b97a55"/></svg></div>
    <span class="app"><svg width="24" height="24" viewBox="0 0 24 24"><path d="M0 7h18v16H0z" fill="#2c2c2c"/><path d="M6 1h18v15H6z" fill="#fff" opacity=".72"/></svg></span>
    <span class="app run"><svg width="24" height="24" viewBox="0 0 24 24"><path d="M0 2q0-1 1-1h8l3 3h11q1 0 1 1v6H0z" fill="#dca01a"/><path d="M0 8h9l2-2h12q1 0 1 1v15q0 1-1 1H1q-1 0-1-1z" fill="#fdcf49"/><path d="M4 23v-6q0-2 2-2h12q2 0 2 2v6z" fill="#1673c8"/></svg></span>
    <span class="app cur"><svg width="24" height="24" viewBox="0 0 24 24"><circle cx="12" cy="12" r="12" fill="#fbc116"/><path d="M12 12L1.600 6A12 12 0 0 1 22.400 6z" fill="#e33b2e"/><path d="M1.600 6A12 12 0 0 0 12 24l5.200-9L12 12 6.800 15z" fill="#229a48"/><circle cx="12" cy="12" r="6" fill="#fff"/><circle cx="12" cy="12" r="4.600" fill="#2672e8"/></svg></span>
    <span class="app run"><svg width="18" height="24" viewBox="0 0 18 24"><path d="M10 0l5 5v6l3 5-4 8-9-2-5-5 4-9z" fill="#8a56dd"/><path d="M10 0l-3 11 4 13-6-2 1-9-2-5z" fill="#6330b4"/><path d="M10 0l5 5-5 9z" fill="#c3a6f7"/></svg></span>
    <span class="app run"><svg width="23" height="23" viewBox="0 0 23 23"><defs><linearGradient id="ph" x1="0" y1="1" x2="1" y2="0"><stop offset="0" stop-color="#1477d6"/><stop offset="1" stop-color="#6650b8"/></linearGradient></defs><rect width="23" height="23" rx="2" fill="url(#ph)"/><path d="M0 20L10 9q1.500-1.500 3 0l10 11v1q0 2-2 2H2q-2 0-2-2z" fill="#36c3f6"/><path d="M4 23l8-8 10 8z" fill="#1a70d2"/><circle cx="17" cy="4.500" r="2" fill="#fff"/></svg></span>
    <span class="app run"><svg width="26" height="26" viewBox="0 0 26 26"><circle cx="11.500" cy="14" r="10.500" fill="#1d1b1e"/><path d="M12 14c-5-1-5-6-1-8M12 14c4-3 8 0 7 4M12 14c1 5-4 8-7 5" fill="none" stroke="#aaa" stroke-width="1.500"/><circle cx="20" cy="6" r="6" fill="#fe0000"/></svg></span>
    <span class="app run"><svg width="24" height="20" viewBox="0 0 24 20"><rect width="24" height="20" rx="1.500" fill="#383838"/><path d="M0 0h24v3H0z" fill="#777"/><path d="M3 7l4 3.500L3 14" fill="none" stroke="#ddd" stroke-width="2"/><path d="M11 15h7" stroke="#fff" stroke-width="2"/></svg></span>
  </div>
  <div class="tray">
    <svg width="11" height="7" viewBox="0 0 11 7"><path d="M.7 6L5.500 1.200 10.300 6" fill="none" stroke="#222" stroke-width="1.500"/></svg>
    <svg class="od" width="17" height="14" viewBox="0 0 17 14"><path d="M3.500 9.500C-1 8 1 3.500 4 3.800 6-.5 12.500 0 13 4.500c1.500.3 2.500 1 2.800 2.500L9 10z" fill="#777" stroke="#222"/><circle cx="12" cy="9" r="4.800" fill="#fff"/><path d="M8.500 8.500A3.500 3.500 0 0 1 15 7M15.500 9.500A3.500 3.500 0 0 1 9 11M15.500 5v2.500H13M8.500 13v-2.500H11" fill="none" stroke="#1f6fc9" stroke-width="1.400"/></svg>
    <svg class="mic" width="12" height="17" viewBox="0 0 12 17"><rect x="3.500" y=".7" width="5" height="9.500" rx="2.500" fill="#d9e8fa" stroke="#1e57a8" stroke-width="1.300"/><path d="M.7 7.500c0 7 10.600 7 10.600 0M6 13v3.500" fill="none" stroke="#1e57a8" stroke-width="1.300"/></svg>
    <svg class="mon" width="17" height="16" viewBox="0 0 17 16"><path d="M11 1H2q-1.300 0-1.300 1.300v8.400Q.7 12 2 12h9M4 15.300h8M6.500 12v3M9.500 12v3M12.500 1.500h3.500v4h-3.500zM14.300 5.500V15" fill="none" stroke="#222" stroke-width="1.300"/></svg>
    <svg class="spk" width="16" height="14" viewBox="0 0 16 14"><path d="M.7 4.700h2.500L7 1.200v11.600L3.200 9.300H.7z" fill="none" stroke="#222" stroke-width="1.200"/><path d="M9 4.800q1.500 2.200 0 4.400M11 3q2.800 4 0 8" fill="none" stroke="#222" stroke-width="1.200"/><path d="M13 1.300q4 5.700 0 11.400" fill="none" stroke="#bbb" stroke-width="1.200"/></svg>
    <div class="clock"><p>10:05 AM</p><p>12/23/2024</p></div>
    <svg class="bell" width="14" height="16" viewBox="0 0 14 16"><path d="M7 .5c3 0 5 2 5 5V9l2 3.500H0L2 9V5.500c0-3 2-5 5-5zM5 13.500h4q-.5 2-2 2t-2-2z" fill="#0a4698"/></svg>
  </div>
</div>
<script src="page.js"></script>
</body>
</html>
```
FILE: styles.css
```css
* { box-sizing: border-box; }
body { margin: 0; width: 2560px; height: 1440px; overflow: hidden; display: flex; flex-direction: column; font-family: "Noto Sans CJK SC", sans-serif; font-size: 12.54px; line-height: 20px; color: #333; }
p, h3 { margin: 0; }
svg { flex: none; }
.defs { position: absolute; }

.tabstrip { height: 40px; flex: none; background: #d5e3fd; display: flex; align-items: center; font-family: "Open Sans", sans-serif; font-size: 11.3px; color: #41464d; }
.tabsearch { width: 28px; height: 28px; margin-left: 6px; border-radius: 10px; background: #edf3fe; display: flex; align-items: center; justify-content: center; }
.tabs { display: flex; margin-left: 4px; align-self: stretch; }
.tab { width: 230px; display: flex; align-items: center; padding: 0 14px 0 10px; background: linear-gradient(#a9c7f7, #a9c7f7) 228px 12px / 2px 16px no-repeat; }
.tab.nosep { background: none; }
.fav { width: 16px; height: 16px; }
.rt { background: #000; color: #fff; font-weight: bold; font-size: 9.5px; line-height: 16px; text-align: center; }
.title { width: 160px; margin-left: 8px; white-space: nowrap; overflow: hidden; -webkit-mask: linear-gradient(90deg, #000 140px, transparent); mask: linear-gradient(90deg, #000 140px, transparent); }
.x { width: 9px; height: 9px; margin-left: 13px; }
.tab.active { background: #fff; margin: 6px 2px 0 3px; width: 225px; padding: 0 12px 6px 7px; border-radius: 9px 9px 0 0; color: #1f2328; position: relative; }
.tab.active::before, .tab.active::after { content: ""; position: absolute; bottom: 0; width: 10px; height: 10px; left: -10px; background: radial-gradient(circle at 0 0, transparent 9.5px, #fff 10px); }
.tab.active::after { left: auto; right: -10px; background: radial-gradient(circle at 100% 0, transparent 9.5px, #fff 10px); }
.plus { margin-left: 11px; }
.winctl { margin-left: auto; display: flex; gap: 36px; align-items: center; padding-right: 17px; }

.toolbar { height: 47px; flex: none; background: #fff; border-bottom: 1px solid #cfdce6; display: flex; align-items: center; padding-left: 14px; font-family: "Open Sans", sans-serif; }
.nav { width: 16px; height: 16px; margin-right: 20px; }
.omnibox { width: 2319px; height: 34px; margin-left: -2px; border-radius: 17px; background: #ecf2fb; display: flex; align-items: center; padding-left: 5px; }
.chip { width: 91px; height: 24px; background: #fff; border-radius: 12px; display: flex; align-items: center; gap: 5px; padding-left: 5px; font-size: 11.5px; color: #1f2328; font-weight: 500; white-space: nowrap; }
.url { margin-left: 8px; font-size: 13.1px; color: #1f2328; }
.url span { color: #44494f; }
.star { margin-left: auto; margin-right: 15px; }
.dl { margin-left: 19px; }
.avatar { width: 20px; height: 20px; border-radius: 50%; background: #33691e; color: #fff; font-size: 11px; line-height: 20px; text-align: center; margin-left: 18px; }
.dots { margin-left: 24px; }

.stage { height: 1305px; flex: none; background: #dbdbdb; position: relative; display: flex; justify-content: center; }
.grain { position: absolute; left: 0; top: 0; }
.wrapper { width: 1250px; display: flex; position: relative; box-shadow: 0 0 8px rgba(0,0,0,.5); background: #ecf0f8; }
.sidebar { width: 230px; background: #222d32; color: #b8c7ce; }
.brand { height: 50px; background: #367fa9; color: #fff; text-align: center; font-size: 17.9px; line-height: 49px; padding-right: 2px; }
.panel { height: 95px; display: flex; padding: 10px 0 0 20px; }
.info { padding: 1px 0 0 21px; color: #fff; font-weight: 500; font-size: 9.8px; line-height: 17px; white-space: nowrap; }
.info p { height: 17px; display: flex; align-items: center; }
.info .st { font-size: 12.54px; font-weight: bold; height: 22px; line-height: 18px; padding-bottom: 4px; }
.info i { width: 11px; height: 11px; border-radius: 50%; background: #7fff00; margin-right: 2px; }
.menu { display: flex; flex-direction: column; }
.menu > a { height: 44px; display: flex; align-items: center; padding: 0 18px 0 17px; }
.menu > a.sep { height: 46px; border-top: 2px solid #1a2226; }
.ic { width: 20px; height: 14px; fill: currentColor; margin-right: 8px; }
.ic.pi { height: 18px; margin-top: -5px; }
.car { width: 10px; height: 10px; margin-left: auto; fill: none; }
.menu > a.open { background: #1e282c; color: #fff; box-shadow: inset 3px 0 #3c8dbc; }
.sub { background: #2c3b41; color: #8aa4af; margin: 0 1px; }
.sub a { display: flex; align-items: center; height: 30px; padding-left: 18.5px; }
.sub a.tall { height: 31px; }
.sub .cur { color: #fff; font-weight: 500; }

.main { width: 1020px; display: flex; flex-direction: column; }
.topbar { height: 50px; background: #3c8dbc; color: #fff; display: flex; align-items: center; }
.fold { margin-left: 19px; }
.host { margin-left: auto; margin-right: 29px; }
.host code { font-family: "Liberation Mono", monospace; font-size: 12.2px; color: #c7254e; background: #f9f2f4; border-radius: 4px; padding: 3px 4px; }
.burger { width: 50px; height: 50px; background: #367fa9; display: flex; align-items: center; justify-content: center; }
.content { padding: 15px; flex: 1; }
.box { height: 785px; border-top: 3px solid #d2d6de; border-radius: 10px; background: #fff; box-shadow: 0 1px 1px rgba(0,0,0,.12); }
.box h3 { font-size: 16.1px; font-weight: 400; height: 41px; line-height: 36px; padding: 0 10px; border-bottom: 1px solid #f4f4f4; color: #444; }
.body { padding: 10px; }
.filters { display: flex; justify-content: space-between; height: 84px; }
.show { display: flex; margin-top: 38px; white-space: pre; height: 20px; }
.select { width: 75px; height: 30px; margin: -3px 1px 0 0; border: 1px solid #d2d6de; font-size: 10.75px; line-height: 30px; color: #555; padding: 0 4px 0 15px; display: flex; justify-content: space-between; align-items: center; }
.right { display: flex; flex-direction: column; align-items: flex-end; }
.find { display: flex; line-height: 25px; height: 30px; }
.input { width: 155px; height: 30px; border: 1px solid #d2d6de; margin-left: 6px; }
.pager { display: flex; height: 34px; margin-top: 7px; border: 1px solid #ddd; border-radius: 4px; line-height: 32px; color: #777; width: 160px; }
.pager span { width: 75px; text-align: center; }
.pager span:last-child { width: 52px; }
.pager .on { width: 33px; height: 34px; margin-top: -1px; background: #337ab7; color: #fff; flex: none; line-height: 34px; }
.tablebox { position: relative; height: 542px; }
table { width: 970px; table-layout: fixed; border-collapse: separate; border-spacing: 0; border: solid #f4f4f4; border-width: 1px 0 0 1px; }
.c1 { width: 238px; } .c2 { width: 122px; } .c3 { width: 95px; } .c4 { width: 147px; } .c5 { width: 79px; } .c6 { width: 79px; } .c7 { width: 91px; } .c8 { width: 59px; } .c9 { width: 59px; }
th, td { border: solid #f4f4f4; border-width: 0 1px 1px 0; padding: 8px; height: 77px; vertical-align: top; text-align: left; white-space: nowrap; position: relative; }
thead th { vertical-align: bottom; height: 79px; border-bottom-width: 3px; line-height: 20px; }
tfoot th { border-bottom-width: 2px; background: linear-gradient(#fbece7, #fbece7) 0 0 / 100% 3px no-repeat; }
.so { position: absolute; right: 8px; bottom: 10px; width: 14px; height: 15px; fill: #d9d9d9; }
.so.dark { fill: #999; }
.ok td { background: #e7ffde; border-color: #e8fae3; }
.ok + .bad td { background: linear-gradient(#f2ddc8, #f2ddc8) 0 0 / 100% 2px no-repeat, #ffbfaa; border-bottom: 5px solid #f6c9b8; }
.ok:nth-child(3) td { border-bottom: 3px solid #f2ddc8; }
.bad td { background: #ffbfaa; border-right: 0; }
.bad:last-child td { border-bottom: 2px solid #fbece7; }
.bad td:not(:last-child)::after { content: ""; position: absolute; top: 0; bottom: 0; right: -2px; width: 5px; background: #f6c9b8; z-index: 1; }
.bad td:first-child::after { right: 0; }
.px svg { display: block; }
.lnk, footer a { color: #3c8dbc; }
td.lnk { color: #5b93a8; }
.chk { width: 14px; height: 14px; margin-top: 2px; display: block; }
.trash { display: flex; width: 22px; height: 22px; border: 1px solid #c9402d; background: #dd4b39; border-radius: 3px; align-items: center; justify-content: center; }
.mark { position: absolute; border: 2px solid #ff3333; box-shadow: 3px 4px 3px rgba(0,0,0,.3), inset 3px 3px 3px rgba(0,0,0,.28); pointer-events: none; z-index: 2; }
.mark.row { left: 1px; top: 79px; width: 968px; height: 74px; }
.summary { display: flex; justify-content: space-between; height: 43px; line-height: 50px; }
.summary .pager { margin-top: 9px; }
.legendbox { position: relative; padding-top: 7px; }
.legendbox p { height: 25px; }
.mark.leg { left: -3px; top: 2px; width: 340px; height: 71px; }
.legend { display: grid; grid-template-columns: 3fr 1fr 1fr; text-align: center; height: 20px; }
.grad { display: grid; grid-template-columns: 1fr 2fr 1fr; background: linear-gradient(90deg, #e7ffde 33%, #ffffdf 90%); }
.day { background: #ffedd9; }
.no { background: #ffbfaa; }
footer { height: 96px; background: #fff; border-top: 1px solid #d2d6de; text-align: center; color: #444; padding-top: 15px; }
footer svg { vertical-align: -2px; }
footer .vers { margin-top: 10px; padding-right: 5px; display: flex; justify-content: center; gap: 13px; }
.cursor { position: absolute; left: 1039px; top: 196px; }

.taskbar { height: 48px; flex: none; background: #eef0f0; border-top: 1px solid #bdbdbd; padding-bottom: 1px; display: grid; grid-template-columns: 1002px 1fr 260px; font-family: "Open Sans", sans-serif; font-size: 11.2px; line-height: 16px; color: #1b1b1b; align-items: center; }
.weather { display: flex; padding-left: 17px; position: relative; align-items: center; margin-top: -2px; }
.weather em { position: absolute; left: 35px; top: 2px; color: #fff; font-style: normal; font-size: 9.5px; }
.weather div { margin-left: 4px; }
.dim { color: #5c5c5c; }
.apps { display: flex; align-items: center; height: 46px; }
.search { width: 218px; height: 30px; margin: 0 2px 0 14px; border: 1px solid #d6d8d8; border-bottom-color: #b8baba; border-radius: 15px; background: #fafafa; display: flex; align-items: center; padding: 0 15px 0 10px; font-size: 12.5px; color: #666; }
.search span { margin-left: 9px; }
.lady { margin-left: auto; }
.app { width: 38px; height: 39px; margin-right: 6px; display: flex; justify-content: center; align-items: center; position: relative; }
.search + .app { margin-left: 4px; }
.app.run::after, .app.cur::after { content: ""; position: absolute; bottom: 0; left: 16px; width: 6px; height: 3px; border-radius: 2px; background: #8a8a8a; }
.app.cur { background: #fbfbfb; border: 1px solid #e3e3e3; border-radius: 4px; }
.app.cur::after { left: 10px; width: 16px; background: #1673c8; bottom: -1px; }
.tray { display: flex; align-items: center; height: 46px; padding-left: 4px; }
.od { margin-left: 19px; } .mic { margin-left: 17px; } .mon { margin-left: 18px; } .spk { margin-left: 6px; }
.clock { width: 80px; text-align: right; margin-top: -2px; }
.bell { margin-left: 8px; }
```
FILE: page.js
```js
// Speckled backdrop on both sides of the boxed layout
(function () {
  var ctx = document.getElementById('grain').getContext('2d');
  var seed = 7;
  function rnd() { seed = (seed * 16807) % 2147483647; return seed / 2147483647; }
  for (var i = 0; i < 19000; i++) {
    ctx.fillStyle = rnd() < 0.6 ? '#b7b7b7' : '#e8e8e8';
    ctx.fillRect(Math.floor(rnd() * 2560), Math.floor(rnd() * 1305), 2, rnd() < 0.7 ? 2 : 1);
  }
})();

// Mosaic cells: each digit is the strength of one 5px block, rows split by "|"
(function () {
  var ns = 'http://www.w3.org/2000/svg';
  var ink = { b: '#5c9bb5', k: '#4b5547', r: '#d8402e' };
  document.querySelectorAll('[data-m]').forEach(function (td) {
    var svg = document.createElementNS(ns, 'svg');
    var bad = td.parentNode.className.indexOf('bad') > -1;
    var shift = 3 + Number(td.parentNode.dataset.dy) + Number(td.dataset.top || 0);
    svg.setAttribute('width', 5); svg.setAttribute('height', 50);
    svg.style.overflow = 'visible';
    svg.style.marginLeft = (td.dataset.dx || 0) + 'px';
    var c = ink[td.dataset.c];
    if (bad && td.dataset.c === 'b') c = '#7f93ac';
    if (bad && td.dataset.c === 'k') c = '#5c4038';
    td.dataset.m.split('|').forEach(function (row, y) {
      for (var x = 0; x < row.length; x++) {
        if (!/\d/.test(row[x])) continue;
        var r = document.createElementNS(ns, 'rect');
        r.setAttribute('x', x * 5); r.setAttribute('y', y * 5 + shift);
        r.setAttribute('width', 5); r.setAttribute('height', 5);
        r.setAttribute('fill', c);
        r.setAttribute('opacity', td.dataset.c === 'r' ? row[x] / 9 : row[x] / 11);
        svg.appendChild(r);
      }
    });
    td.appendChild(svg);
  });
})();
```
